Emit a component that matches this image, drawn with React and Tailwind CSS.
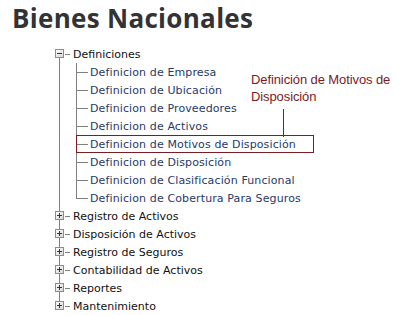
import React from "react";

const children = [
  "Definicion de Empresa",
  "Definicion de Ubicación",
  "Definicion de Proveedores",
  "Definicion de Activos",
  "Definicion de Motivos de Disposición",
  "Definicion de Disposición",
  "Definicion de Clasificación Funcional",
  "Definicion de Cobertura Para Seguros",
];

const others = [
  "Registro de Activos",
  "Disposición de Activos",
  "Registro de Seguros",
  "Contabilidad de Activos",
  "Reportes",
  "Mantenimiento",
];

function Box({ plus }) {
  return (
    <svg width="9" height="9" viewBox="0 0 9 9" className="shrink-0 block">
      <defs>
        <linearGradient id={plus ? "gp" : "gm"} x1="0" y1="0" x2="1" y2="1">
          <stop offset="0" stopColor="#ffffff" />
          <stop offset="1" stopColor="#d6d6d6" />
        </linearGradient>
      </defs>
      <rect x="0.5" y="0.5" width="8" height="8" fill={`url(#${plus ? "gp" : "gm"})`} stroke="#8c8c8c" />
      <path d="M2 4.5H7" stroke="#333" />
      {plus && <path d="M4.5 2V7" stroke="#333" />}
    </svg>
  );
}

function TopRow({ label, plus, last, first }) {
  return (
    <div className="flex h-[18px] items-center">
      <div className="flex flex-col items-center w-[9px] h-[18px]">
        <div className={"w-px h-[4px] " + (first ? "" : "bg-[#808080]")} />
        <Box plus={plus} />
        <div className={"w-px h-[5px] " + (last ? "" : "bg-[#808080]")} />
      </div>
      <div className="w-[5px] h-px bg-[#808080] ml-px" />
      <span className="ml-[3px] text-[11px] text-[#111] font-['DejaVu_Sans',sans-serif] leading-none whitespace-nowrap">
        {label}
      </span>
    </div>
  );
}

function ChildRow({ label, last, highlight }) {
  return (
    <div className="flex h-[18px]">
      <div className="flex justify-center w-[9px] h-[18px]">
        <div className="w-px h-full bg-[#808080]" />
      </div>
      <div
        className={
          "ml-[12px] flex h-[18px] items-center " +
          (highlight ? "w-[238px] outline outline-1 outline-offset-[-1px] outline-[#7a1e24]" : "")
        }
      >
        <div className="flex flex-col w-[12px] h-[18px]">
          <div className="h-[9px] border-l border-[#808080]" />
          <div className={"h-[9px] border-t border-[#808080] " + (last ? "" : "border-l")} />
        </div>
        <span className="ml-[2px] text-[11px] tracking-[0.12px] text-[#1f3a6b] font-['DejaVu_Sans',sans-serif] leading-none whitespace-nowrap">
          {label}
        </span>
      </div>
    </div>
  );
}

export default function App() {
  return (
    <div className="relative w-[399px] h-[315px] bg-white overflow-hidden">
      <h1 className="pl-[12px] pt-[3px] text-[26px] leading-[30px] font-bold text-[#333] font-['Open_Sans',sans-serif] tracking-[0.3px]">
        Bienes Nacionales
      </h1>
      <div className="pl-[55px] pt-[12px]">
        <TopRow label="Definiciones" first />
        {children.map((c, i) => (
          <ChildRow key={c} label={c} last={i === children.length - 1} highlight={i === 4} />
        ))}
        {others.map((o, i) => (
          <TopRow key={o} label={o} plus last={i === others.length - 1} />
        ))}
      </div>
      <div className="absolute left-[251px] top-[71px] flex flex-col items-start">
        <div className="text-[13px] leading-[17px] text-[#7d1a1e] font-['Liberation_Sans',sans-serif] tracking-[-0.1px]">
          Definición de Motivos de
          <br />
          Disposición
        </div>
        <div className="ml-[32px] mt-[4px] w-px h-[28px] bg-[#7a1e24]" />
      </div>
    </div>
  );
}
